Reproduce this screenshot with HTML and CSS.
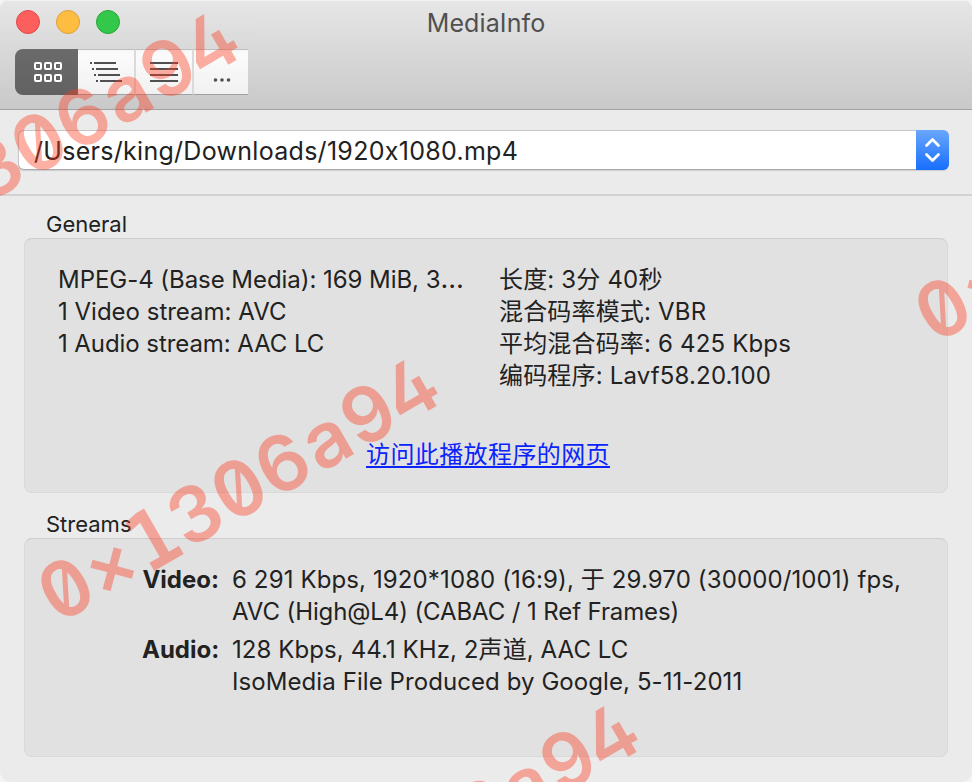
FILE: index.html
```html
<!DOCTYPE html>
<html lang="zh-CN">
<head>
<meta charset="utf-8">
<title>MediaInfo</title>
<link rel="stylesheet" href="styles.css">
</head>
<body>
<main class="window">
  <header class="titlebar">
    <div class="title-row">
      <div class="lights"><i class="light red"></i><i class="light yellow"></i><i class="light green"></i></div>
      <h1 class="title">MediaInfo</h1>
    </div>
    <nav class="segments">
      <button class="segment active" aria-label="Grid"><svg width="63" height="46" fill="none" stroke="#fff" stroke-width="2"><rect x="20" y="14" width="6" height="6" rx="1"/><rect x="30" y="14" width="6" height="6" rx="1"/><rect x="40" y="14" width="6" height="6" rx="1"/><rect x="20" y="26" width="6" height="6" rx="1"/><rect x="30" y="26" width="6" height="6" rx="1"/><rect x="40" y="26" width="6" height="6" rx="1"/></svg></button>
      <button class="segment" aria-label="Tree"><svg width="56" height="44" stroke="#505050" stroke-width="2"><path d="M12 13h2M16 13h22M14 19h2M18 19h22M16 25h2M20 25h22M18 31h2M22 31h22"/></svg></button>
      <button class="segment" aria-label="Text"><svg width="56" height="44" stroke="#505050" stroke-width="2"><path d="M14 13h28M14 19h28M14 25h28M14 31h28"/></svg></button>
      <button class="segment" aria-label="More"><svg width="54" height="44" fill="#505050"><circle cx="21.500" cy="30" r="1.800"/><circle cx="28" cy="30" r="1.800"/><circle cx="34.500" cy="30" r="1.800"/></svg></button>
    </nav>
  </header>
  <section class="filebar">
    <div class="combo">
      <span class="path">/Users/king/Downloads/1920x1080.mp4</span>
      <button class="stepper" aria-label="Choose file"><svg width="33" height="40" fill="none" stroke="#fff" stroke-width="2.800" stroke-linecap="round" stroke-linejoin="round"><path d="M10.500 15.500l6-6 6 6M10.500 24.500l6 6 6-6"/></svg></button>
    </div>
  </section>
  <section class="content">
    <h2 class="label">General</h2>
    <div class="group general">
      <div class="columns">
        <div><p class="g1">MPEG-4 (Base Media): 169 MiB, 3<span class="dots">…</span></p><p>1 Video stream: AVC</p><p class="tight">1 Audio stream: AAC LC</p></div>
        <div class="details"><p>长度: 3分 40秒</p><p>混合码率模式: VBR</p><p>平均混合码率: 6 425 Kbps</p><p>编码程序: Lavf58.20.100</p></div>
      </div>
      <a class="link">访问此播放程序的网页</a>
    </div>
    <h2 class="label second">Streams</h2>
    <div class="group streams">
      <b class="kind">Video:</b>
      <div><p class="video">6 291 Kbps, 1920*1080 (16:9), 于 29.970 (30000/1001) fps,</p><p class="codec">AVC (High@L4) (CABAC / 1 Ref Frames)</p></div>
      <b class="kind">Audio:</b>
      <div><p class="loose">128 Kbps, 44.1 KHz, 2声道, AAC LC</p><p class="loose">IsoMedia File Produced by Google, 5-11-2011</p></div>
    </div>
  </section>
  <svg class="watermark" width="972" height="782" aria-hidden="true">
    <g transform="translate(-134 243)"><text class="mark" transform="rotate(-30)" x="0 50 100 150 200 250 300 349 398" y="27">0<tspan class="times">×</tspan><tspan class="one">1</tspan>306a94</text></g>
    <g transform="translate(66 589)"><text class="mark" transform="rotate(-30)" x="0 50 100 150 200 250 300 349 398" y="27">0<tspan class="times">×</tspan><tspan class="one">1</tspan>306a94</text></g>
    <g transform="translate(266 935)"><text class="mark" transform="rotate(-30)" x="0 50 100 150 200 250 300 349 398" y="27">0<tspan class="times">×</tspan><tspan class="one">1</tspan>306a94</text></g>
    <g transform="translate(943 309)"><text class="mark" transform="rotate(-30)" x="0 50" y="27">0<tspan class="times">×</tspan></text></g>
  </svg>
</main>
</body>
</html>
```

FILE: styles.css
```css
* { box-sizing: border-box; }
body { margin: 0; background: #f4f4f4; font-family: Inter, "Noto Sans CJK SC", sans-serif; font-feature-settings: "calt" 0; color: #222; }
h1, h2, p { margin: 0; font-weight: 400; white-space: nowrap; }
button { border: 0; padding: 0; margin: 0; background: none; }
svg { display: block; }
.window { position: relative; width: 972px; height: 782px; overflow: hidden; border-radius: 9px 9px 11px 11px; background: #ebebeb; }
.titlebar { height: 110px; background: linear-gradient(#e6e6e6, #c9c9c9); border-top: 1px solid #f2f2f2; border-bottom: 1px solid #a4a4a4; }
.title-row { height: 48px; display: grid; grid-template-columns: 160px 652px 160px; }
.lights { display: flex; gap: 16px; padding: 9px 0 0 16px; }
.light { width: 24px; height: 24px; border-radius: 50%; border: 1px solid; }
.red { background: #fd605c; border-color: #e4484a; }
.yellow { background: #fdbd41; border-color: #e0a138; }
.green { background: #34c84a; border-color: #27aa35; }
.title { font-size: 25px; letter-spacing: .1px; line-height: 45px; text-align: center; color: #505050; }
.segments { display: flex; margin-left: 15px; width: 233px; height: 46px; }
.segment { flex: 0 0 58px; height: 46px; background: linear-gradient(#f6f6f6, #fbfbfb 10%, #f1f1f1); border-top: 1px solid #bfbfbf; border-bottom: 1px solid #a0a0a0; border-right: 2px solid #dadada; }
.segment.active { flex-basis: 63px; background: linear-gradient(#6b6b6b, #626262); border: 0; border-radius: 8px 0 0 8px; }
.segment:last-child { flex-basis: 54px; border-right: 0; }
.filebar { height: 86px; border-bottom: 2px solid #d2d2d2; padding: 20px 23px 0 18px; }
.combo { display: flex; height: 40px; background: #fff; border-radius: 6px; box-shadow: inset 0 1px #c6c6c6, inset 0 -1px #aaa, inset 1px 0 #c9c9c9, 0 1px 1px #ccc; }
.path { flex: 1; padding-left: 16px; line-height: 42px; font-size: 25px; letter-spacing: .29px; white-space: nowrap; }
.stepper { width: 33px; height: 40px; background: linear-gradient(#6aa7fb, #176efd); border-radius: 0 6px 6px 0; }
.content { padding: 14px 24px 0; }
.label { padding-left: 22px; height: 28px; line-height: 29px; font-size: 22px; }
.second { margin-top: 17px; }
.group { background: #e1e1e1; border: 1px solid #d9d9d9; border-top-color: #cdcdcd; border-radius: 8px; font-size: 24px; }
.group p, .kind { height: 32px; line-height: 32px; }
.general { height: 255px; padding: 25px 33px 0; }
.columns { display: grid; grid-template-columns: 441px 1fr; height: 175px; }
.g1 { letter-spacing: -.05px; }
.dots { font-size: 27px; line-height: 1; }
.tight { letter-spacing: -.07px; }
.details { letter-spacing: .17px; }
.video { letter-spacing: .12px; }
.loose { letter-spacing: .08px; }
.codec { letter-spacing: -.11px; }
.link { display: block; width: 243px; margin: 0 auto 0 308px; line-height: 32px; color: #0b24fb; text-decoration: underline; text-decoration-thickness: 2px; text-underline-offset: 3px; letter-spacing: .4px; white-space: nowrap; }
.streams { height: 219px; padding: 25px 0 0 117px; display: grid; grid-template-columns: 77px 1fr; grid-template-rows: 64px 64px; gap: 6px 13px; }
.kind { text-align: right; font-weight: 700; }
.watermark { position: absolute; left: 0; top: 0; pointer-events: none; }
.mark { font: 600 77px Inter; text-anchor: middle; fill: #ff3b20; opacity: .4; font-feature-settings: "zero", "cv02", "tnum", "calt" 0; }
.one { font-family: "DejaVu Sans Mono"; font-weight: 400; stroke: #ff3b20; stroke-width: 3px; }
.times { font-size: 73px; }
```
